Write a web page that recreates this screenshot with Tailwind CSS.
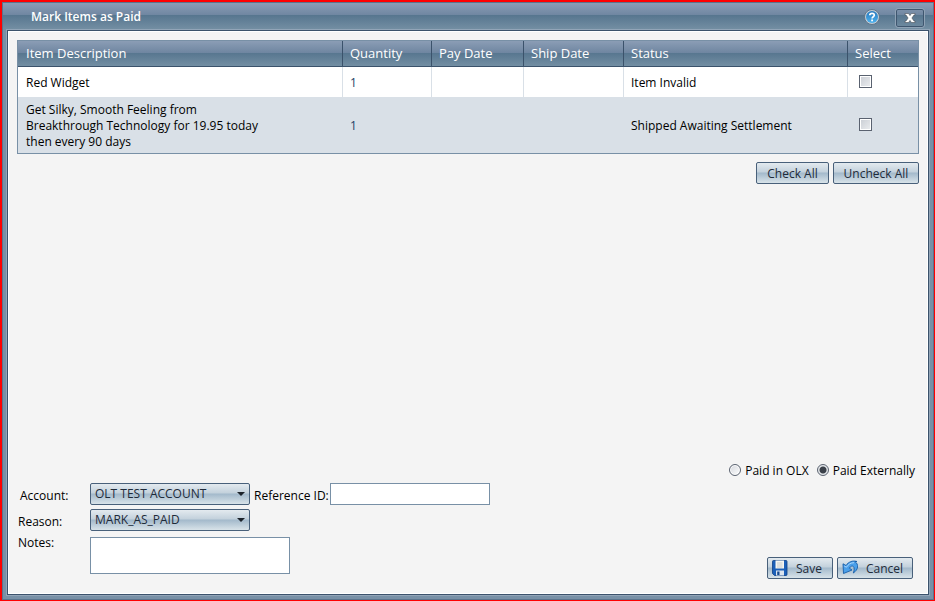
<!DOCTYPE html>
<html lang="en">
<head>
  <meta charset="UTF-8" />
  <meta name="viewport" content="width=device-width, initial-scale=1.0"/>
  <title>Mark Items as Paid</title>
  <script src="https://cdn.jsdelivr.net/npm/@tailwindcss/browser@4"></script>
</head>
<body class="font-['Segoe_UI','Open_Sans',sans-serif] text-xs text-black">

  <div class="min-h-screen flex flex-col border-t-2 border-l-2 border-r border-b border-[#ff0000] bg-[#7890a6]">
    <div class="grow flex flex-col border border-[#5c738b]">

      <!-- Title bar -->
      <header class="h-[27px] flex items-center bg-[linear-gradient(#8b9db5,#6f86a1_45%,#57768f_46%,#7590a4)] pl-7 pr-[9px]">
        <h1 class="grow font-semibold text-white">Mark Items as Paid</h1>
        <button type="button" aria-label="Help" class="mr-4">
          <svg width="16" height="16" viewBox="0 0 16 16">
            <defs>
              <linearGradient id="helpFill" x1="0" y1="0" x2="0" y2="1">
                <stop offset="0" stop-color="#2878bd"/>
                <stop offset="1" stop-color="#4db2ee"/>
              </linearGradient>
            </defs>
            <circle cx="8" cy="8" r="7.5" fill="#c3cdd6" stroke="#5f7488" stroke-width="1"/>
            <circle cx="8" cy="8" r="6" fill="url(#helpFill)"/>
            <path d="M5.8 6.3C5.8 3.7 10.3 3.7 10.3 6.2C10.3 7.7 8.1 7.7 8.1 9.4" fill="none" stroke="#fff" stroke-width="1.7"/>
            <rect x="7.2" y="10.5" width="1.8" height="1.8" fill="#fff"/>
          </svg>
        </button>
        <button type="button" aria-label="Close" class="mt-0.5 w-7 h-[18px] flex items-center justify-center rounded-xs border border-[#3f566f] outline outline-[#8fa2b5]">
          <svg width="12" height="10" viewBox="0 0 12 10">
            <path d="M1 .5H4.6L6 2.6L7.400 .5H11V2H10L7.900 5L10 8H11V9.500H7.400L6 7.400L4.600 9.500H1V8H2L4.100 5L2 2H1Z" fill="#fff" stroke="#4a4f55" stroke-width=".6"/>
          </svg>
        </button>
      </header>

      <main class="grow flex flex-col mx-1 mb-1 border border-[#3b526b] outline outline-[#92a5b8] bg-[#f4f4f4] shadow-[inset_0_0_0_1px_#fff] px-[9px] pt-[9px]">

        <table class="w-full table-fixed border border-[#7890a6] border-separate border-spacing-0 text-left">
          <colgroup>
            <col />
            <col class="w-[89px]" />
            <col class="w-[92px]" />
            <col class="w-[100px]" />
            <col class="w-[224px]" />
            <col class="w-[70px]" />
          </colgroup>
          <thead class="h-[26px] text-[13px] leading-4 text-white bg-[linear-gradient(#8b9db5,#6f86a1_45%,#57768f_46%,#7590a4)]">
            <tr>
              <th class="pl-2 pb-0.5 font-medium border-r border-b border-[#3b526b]">Item Description</th>
              <th class="pl-[7px] pb-0.5 font-medium border-r border-b border-[#3b526b]">Quantity</th>
              <th class="pl-[7px] pb-0.5 font-medium border-r border-b border-[#3b526b]">Pay Date</th>
              <th class="pl-[7px] pb-0.5 font-medium border-r border-b border-[#3b526b]">Ship Date</th>
              <th class="pl-[7px] pb-0.5 font-medium border-r border-b border-[#3b526b]">Status</th>
              <th class="pl-[7px] pb-0.5 font-medium border-b border-[#3b526b]">Select</th>
            </tr>
          </thead>
          <tbody>
            <tr class="h-[30px] bg-white">
              <td class="pl-2 pt-0.5 border-r border-[#d9e0e7]">Red Widget</td>
              <td class="pl-[7px] pt-0.5 border-r border-[#d9e0e7] text-[#1f3f66]">1</td>
              <td class="border-r border-[#d9e0e7]"></td>
              <td class="border-r border-[#d9e0e7]"></td>
              <td class="pl-[7px] pt-0.5 border-r border-[#d9e0e7]">Item Invalid</td>
              <td class="pl-[11px] pb-0.5"><input type="checkbox" aria-label="Select Red Widget" class="block appearance-none size-[13px] border border-[#5a6270] bg-linear-to-br from-[#c9cdd4] to-[#eceef0] shadow-[inset_0_0_0_1px_#fff]" /></td>
            </tr>
            <tr class="h-14 bg-[#d9e0e7]">
              <td class="pl-2 pt-0.5 whitespace-nowrap">Get Silky, Smooth Feeling from<br>Breakthrough Technology for 19.95 today<br>then every 90 days</td>
              <td class="pl-[7px] pt-0.5 text-[#1f3f66]">1</td>
              <td></td>
              <td></td>
              <td class="pl-[7px] pt-0.5">Shipped Awaiting Settlement</td>
              <td class="pl-[11px] pb-0.5"><input type="checkbox" aria-label="Select Get Silky, Smooth Feeling" class="block appearance-none size-[13px] border border-[#5a6270] bg-linear-to-br from-[#c9cdd4] to-[#eceef0] shadow-[inset_0_0_0_1px_#fff]" /></td>
            </tr>
          </tbody>
        </table>

        <div class="flex justify-end gap-1 mt-2">
          <button type="button" class="h-[22px] w-[73px] pt-0.5 rounded-xs border border-[#48607a] bg-[linear-gradient(#e3eaef,#c3d1dc_45%,#a3b9cb_50%,#d8e3e9)] text-[#1e2b3a]">Check All</button>
          <button type="button" class="h-[22px] w-[86px] pt-0.5 rounded-xs border border-[#48607a] bg-[linear-gradient(#e3eaef,#c3d1dc_45%,#a3b9cb_50%,#d8e3e9)] text-[#1e2b3a]">Uncheck All</button>
        </div>

        <form class="mt-auto pl-px pb-[15px]">
          <div class="flex justify-end items-center gap-2 pr-1 mb-1">
            <label class="flex items-center gap-1">
              <input type="radio" name="paid" class="appearance-none size-3 mb-0.5 rounded-full border border-[#5a6270] bg-linear-to-br from-[#d3d6dc] to-white shadow-[inset_0_0_0_1px_#fff]" />
              Paid in OLX
            </label>
            <label class="flex items-center gap-1">
              <input type="radio" name="paid" checked class="appearance-none size-3 mb-0.5 rounded-full border border-[#5a6270] bg-white checked:bg-[radial-gradient(circle,#3a4049_0_3px,#e4e7ea_4px)]" />
              Paid Externally
            </label>
          </div>

          <div class="flex items-end justify-between">
            <div class="grid grid-cols-[72px_auto] gap-y-1 items-center pb-[5px]">
              <label for="account" class="pt-1 pl-0.5">Account:</label>
              <div class="flex items-center">
                <div class="relative">
                  <select id="account" class="block appearance-none h-[22px] w-40 pl-1 rounded-xs border border-[#48607a] bg-[linear-gradient(#e3eaef,#c3d1dc_45%,#a3b9cb_50%,#d8e3e9)] text-[#1e2b3a]">
                    <option>OLT TEST ACCOUNT</option>
                  </select>
                  <svg class="absolute right-[5px] top-[9px] pointer-events-none" width="8" height="4" viewBox="0 0 8 4"><path d="M0 0H8L4 4Z" fill="#1c232b"/></svg>
                </div>
                <label for="reference" class="w-20 pt-1 pl-1 whitespace-nowrap">Reference ID:</label>
                <input id="reference" type="text" class="h-[22px] w-40 px-1 border border-[#7890a6] bg-white" />
              </div>

              <label for="reason" class="pt-1">Reason:</label>
              <div class="relative w-40">
                <select id="reason" class="block appearance-none h-[22px] w-40 pl-1 rounded-xs border border-[#48607a] bg-[linear-gradient(#e3eaef,#c3d1dc_45%,#a3b9cb_50%,#d8e3e9)] text-[#1e2b3a]">
                  <option>MARK_AS_PAID</option>
                </select>
                <svg class="absolute right-[5px] top-[9px] pointer-events-none" width="8" height="4" viewBox="0 0 8 4"><path d="M0 0H8L4 4Z" fill="#1c232b"/></svg>
              </div>

              <label for="notes" class="self-start">Notes:</label>
              <textarea id="notes" class="block mt-0.5 h-[37px] w-[200px] px-1 resize-none border border-[#7890a6] bg-white"></textarea>
            </div>

            <div class="flex gap-1 pr-1.5">
              <button type="button" class="flex items-center gap-2 h-[22px] w-[66px] pl-1 rounded-xs border border-[#48607a] bg-[linear-gradient(#e3eaef,#c3d1dc_45%,#a3b9cb_50%,#d8e3e9)] text-[#1e2b3a]">
                <svg width="16" height="16" viewBox="0 0 16 16">
                  <path d="M.5 1.500Q.5 .5 1.500 .5H14Q15 .5 15 1.500V14.500Q15 15.500 14 15.500H2.500L.5 13.500Z" fill="#1b5fb8" stroke="#0d3f86" stroke-width=".8"/>
                  <rect x="3.500" y=".5" width="8.500" height="8" fill="#f5f5f0"/>
                  <path d="M5 3H10.500M5 5H10.500M5 7H10.500" stroke="#c5c9cc"/>
                  <rect x="4" y="10.500" width="8" height="5" fill="#dbe4ee"/>
                  <rect x="5.200" y="11.500" width="2.300" height="3.500" fill="#17498e"/>
                </svg>
                <span class="pt-0.5">Save</span>
              </button>
              <button type="button" class="flex items-center gap-2 h-[22px] w-[76px] pl-1 rounded-xs border border-[#48607a] bg-[linear-gradient(#e3eaef,#c3d1dc_45%,#a3b9cb_50%,#d8e3e9)] text-[#1e2b3a]">
                <svg width="16" height="16" viewBox="0 0 16 16">
                  <path d="M15 1.500C10.500 .2 6.500 1.800 4 5.500L1 3.800L1.500 13.500L10 10L7.300 8.200C8.500 6.300 10.200 5.500 11.300 6.500C12.500 7.600 12.500 10 11.300 13C16.500 9.500 17 4.500 13 1.500Z" fill="#4ba0ea" stroke="#175ea8" stroke-width=".9" stroke-linejoin="round"/>
                  <path d="M2.200 6L4.500 7.200C6.300 4.200 8.800 2.700 12 2.700" fill="none" stroke="#b4dcff" stroke-width=".9"/>
                </svg>
                <span class="pt-0.5">Cancel</span>
              </button>
            </div>
          </div>
        </form>

      </main>
    </div>
  </div>

</body>
</html>
